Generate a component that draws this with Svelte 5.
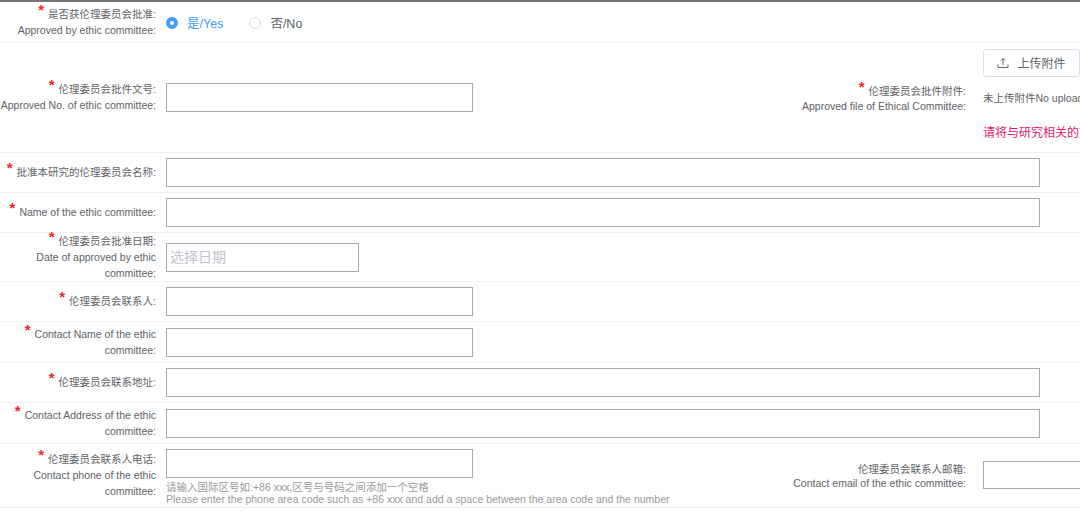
<script>
  const fullRows = [
    { zh: '批准本研究的伦理委员会名称:', kind: 'wide', h: 'h40' },
    { en: ['Name of the ethic committee:'], kind: 'wide', h: 'h40' }
  ];
  const midRows = [
    { zh: '伦理委员会联系人:', kind: 'mid', h: 'h40' },
    { en: ['Contact Name of the ethic', 'committee:'], kind: 'mid', h: 'h41' },
    { zh: '伦理委员会联系地址:', kind: 'wide', h: 'h40' },
    { en: ['Contact Address of the ethic', 'committee:'], kind: 'wide', h: 'h41' }
  ];
</script>

{#snippet label(zh, en, star = true)}
  <div class="label">
    {#if zh}<div class="line">{#if star}<span class="star">*</span>{/if}{zh}</div>{/if}
    {#if en}
      {#each en as t, i}
        <div class="line">{#if star && !zh && i === 0}<span class="star">*</span>{/if}{t}</div>
      {/each}
    {/if}
  </div>
{/snippet}

{#snippet simpleRow(r)}
  <div class="row {r.h}">
    {@render label(r.zh, r.en)}
    <div class="box {r.kind}"></div>
  </div>
{/snippet}

<div class="page">
  <div class="row h41 first">
    {@render label('是否获伦理委员会批准:', ['Approved by ethic committee:'])}
    <div class="radios">
      <span class="radio on"><i class="dot"></i>是/Yes</span>
      <span class="radio"><i class="dot"></i>否/No</span>
    </div>
  </div>

  <div class="row h110">
    <div class="half">
      {@render label('伦理委员会批件文号:', ['Approved No. of ethic committee:'])}
      <div class="box mid"></div>
    </div>
    <div class="right">
      {@render label('伦理委员会批件附件:', ['Approved file of Ethical Committee:'])}
      <div class="upload">
        <div class="btn">
          <svg width="12" height="12" viewBox="0 0 12 12" fill="none" stroke="#606266" stroke-width="1">
            <path d="M6 8V1.5M3.8 3.6 6 1.4l2.2 2.2M1 7.5v3h10v-3" />
          </svg>
          <span>上传附件</span>
        </div>
        <div class="none">未上传附件No upload file</div>
        <div class="warn">请将与研究相关的文件上传至附件</div>
      </div>
    </div>
  </div>

  {#each fullRows as r}{@render simpleRow(r)}{/each}

  <div class="row h49">
    {@render label('伦理委员会批准日期:', ['Date of approved by ethic', 'committee:'])}
    <div class="box date">选择日期</div>
  </div>

  {#each midRows as r}{@render simpleRow(r)}{/each}

  <div class="row h64 last">
    <div class="half">
      {@render label('伦理委员会联系人电话:', ['Contact phone of the ethic', 'committee:'])}
      <div class="stack">
        <div class="box mid"></div>
        <div class="hint">请输入国际区号如:+86 xxx,区号与号码之间添加一个空格<br />Please enter the phone area code such as +86 xxx and add a space between the area code and the number</div>
      </div>
    </div>
    <div class="right mail">
      {@render label('伦理委员会联系人邮箱:', ['Contact email of the ethic committee:'], false)}
      <div class="box tail"></div>
    </div>
  </div>
</div>

<style>
  :global(body) {
    margin: 0;
    background: #fff;
  }
  .page {
    width: 1080px;
    height: 511px;
    overflow: hidden;
    box-sizing: border-box;
    border-top: 2px solid #757575;
    font-family: "Liberation Sans", "Noto Sans CJK SC", sans-serif;
    font-size: 10.5px;
    color: #606266;
  }
  .row {
    position: relative;
    display: flex;
    align-items: center;
    box-sizing: border-box;
    border-bottom: 1px solid #eeeeee;
    width: 1080px;
  }
  .h40 { height: 40px; }
  .h41 { height: 41px; }
  .h49 { height: 49px; }
  .h64 { height: 64px; }
  .h110 { height: 110px; }
  .half {
    display: flex;
    align-items: center;
    flex: none;
  }
  .label {
    flex: none;
    width: 156px;
    margin-top: -2px;
    margin-right: 10px;
    text-align: right;
    line-height: 16px;
    white-space: nowrap;
  }
  .star {
    display: inline-block;
    color: #f5222d;
    font-size: 15px;
    font-weight: 700;
    line-height: 10px;
    margin-right: 4px;
    vertical-align: 3px;
  }
  .box {
    box-sizing: border-box;
    height: 29px;
    border: 1px solid #a9a9a9;
    background: #fff;
    flex: none;
  }
  .mid { width: 307px; }
  .wide { width: 874px; }
  .date {
    width: 193px;
    padding-left: 3px;
    font-size: 14px;
    line-height: 26px;
    color: #c0c4cc;
  }
  .radios {
    display: flex;
    gap: 26px;
    font-size: 12.5px;
    margin-top: 1px;
  }
  .radio {
    display: flex;
    align-items: center;
    gap: 9px;
  }
  .dot {
    box-sizing: border-box;
    width: 12px;
    height: 12px;
    border-radius: 50%;
    border: 1px solid #dcdfe6;
    background: #fff;
  }
  .radio.on { color: #409eff; }
  .radio.on .dot {
    border: 4px solid #409eff;
  }
  .right {
    position: absolute;
    left: 780px;
    display: flex;
    align-items: center;
    width: 300px;
    overflow: hidden;
  }
  .right .label {
    width: 186px;
    margin-top: 0;
    margin-right: 17px;
    line-height: 15px;
  }
  .mail .label {
    line-height: 14px;
  }
  .upload {
    flex: none;
    display: flex;
    flex-direction: column;
    align-items: flex-start;
    white-space: nowrap;
    margin-bottom: 6px;
  }
  .btn {
    box-sizing: border-box;
    width: 97px;
    height: 28px;
    border: 1px solid #dcdfe6;
    border-radius: 3px;
    display: flex;
    align-items: center;
    justify-content: center;
    gap: 8px;
    font-size: 12px;
  }
  .none {
    margin-top: 13px;
    line-height: 16px;
  }
  .warn {
    margin-top: 19px;
    color: #e6186f;
    font-size: 12px;
    line-height: 16px;
  }
  .stack {
    display: flex;
    flex-direction: column;
    white-space: nowrap;
    margin-top: 3px;
  }
  .hint {
    margin-top: 3px;
    font-size: 10.5px;
    line-height: 12px;
    color: #999;
  }
  .tail {
    width: 120px;
    height: 28px;
    margin-bottom: 2px;
  }
</style>
